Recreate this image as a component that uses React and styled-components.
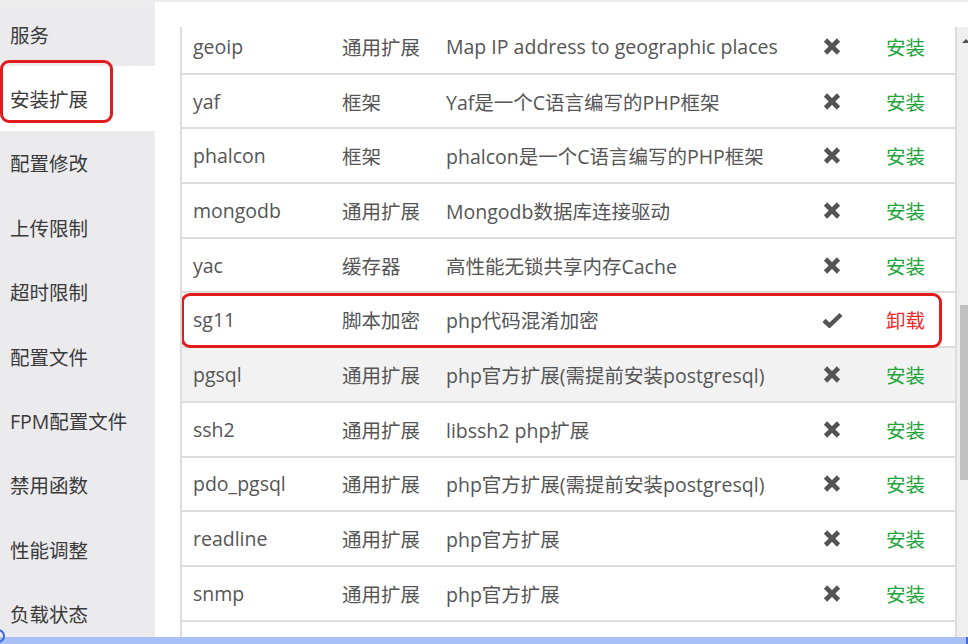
import React, { useLayoutEffect, useRef } from "react";
import styled, { createGlobalStyle } from "styled-components";

const Global = createGlobalStyle`
  html, body { margin: 0; padding: 0; }
  body {
    width: 968px;
    height: 644px;
    overflow: hidden;
    background: #fff;
    font-family: "Open Sans", "Noto Sans CJK SC", sans-serif;
  }
  * { box-sizing: border-box; }
`;

const Page = styled.div`
  width: 968px;
  height: 644px;
  display: flex;
  flex-direction: column;
  overflow: hidden;
`;

const TopLine = styled.div`
  height: 2px;
  flex: none;
  background: #ededed;
`;

const Body = styled.div`
  height: 635px;
  flex: none;
  display: flex;
  overflow: hidden;
`;

const Sidebar = styled.nav`
  width: 155px;
  flex: none;
  background: #ebebee;
  display: flex;
  flex-direction: column;
`;

const NavItem = styled.div`
  position: relative;
  height: 64.4px;
  flex: none;
  display: flex;
  align-items: center;
  padding-left: 10px;
  font-size: 19.5px;
  color: #3a3a3a;
  background: ${(p) => (p.$active ? "#fff" : "transparent")};
`;

const Annotation = styled.div`
  position: absolute;
  border: 3px solid #e21c1c;
  border-radius: 9px;
  pointer-events: none;
  top: ${(p) => p.$top}px;
  left: ${(p) => p.$left}px;
  width: ${(p) => p.$width}px;
  height: ${(p) => p.$height}px;
`;

const Main = styled.main`
  flex: 1;
  background: #fff;
  padding: 25px 0 0 25px;
  display: flex;
  min-width: 0;
`;

const Viewport = styled.div`
  flex: 1;
  overflow: hidden;
  border-left: 2px solid #dddddd;
`;

const Row = styled.div`
  position: relative;
  height: 54.7px;
  display: grid;
  grid-template-columns: 150px 104px 364px 64px 91px;
  align-items: center;
  border-bottom: 2px solid #dddddd;
  background: ${(p) => (p.$hover ? "#f2f2f2" : "#fff")};
  font-size: 19.5px;
  color: #555;
  white-space: nowrap;
`;

const Cell = styled.div`
  padding-left: ${(p) => p.$pad ?? 10}px;
  overflow: hidden;
`;

const StatusCell = styled.div`
  display: flex;
  justify-content: center;
  align-items: center;
  color: #545454;
`;

const Action = styled.a`
  padding-left: 22px;
  color: ${(p) => (p.$danger ? "#ee2b2b" : "#20a53a")};
  text-decoration: none;
  cursor: pointer;
`;

const Scrollbar = styled.div`
  width: 13px;
  flex: none;
  background: #efefef;
  border-left: 2px solid #dddddd;
  display: flex;
  flex-direction: column;
`;

const Arrow = styled.div`
  margin: 12px 0 0 5px;
  width: 0;
  height: 0;
  border-left: 4px solid transparent;
  border-right: 4px solid transparent;
  border-bottom: 4px solid #505050;
`;

const Thumb = styled.div`
  margin: 262px 0 0 3px;
  width: 10px;
  height: 175px;
  background: #c1c1c1;
`;

const BottomBar = styled.div`
  position: relative;
  height: 7px;
  flex: none;
  background: #a8c0f5;
  border-right: 2px solid #3a6be0;
`;

const Knob = styled.div`
  position: absolute;
  left: -9px;
  top: -8px;
  width: 14px;
  height: 14px;
  border-radius: 50%;
  border: 2px solid #3a6be0;
`;

const Cross = () => (
  <svg width="18" height="17" viewBox="0 0 18 17">
    <path d="M2.5 2 L15.5 15 M15.5 2 L2.5 15" stroke="currentColor" strokeWidth="4.6" fill="none" />
  </svg>
);

const Check = () => (
  <svg width="21" height="16" viewBox="0 0 21 16">
    <path d="M2 8.5 L7.5 13.5 L19 2.5" stroke="currentColor" strokeWidth="4.4" fill="none" strokeLinejoin="miter" />
  </svg>
);

const navItems = [
  "服务",
  "安装扩展",
  "配置修改",
  "上传限制",
  "超时限制",
  "配置文件",
  "FPM配置文件",
  "禁用函数",
  "性能调整",
  "负载状态",
];

const extensions = [
  { name: "geoip", type: "通用扩展", desc: "Map IP address to geographic places" },
  { name: "yaf", type: "框架", desc: "Yaf是一个C语言编写的PHP框架" },
  { name: "phalcon", type: "框架", desc: "phalcon是一个C语言编写的PHP框架" },
  { name: "mongodb", type: "通用扩展", desc: "Mongodb数据库连接驱动" },
  { name: "yac", type: "缓存器", desc: "高性能无锁共享内存Cache" },
  { name: "sg11", type: "脚本加密", desc: "php代码混淆加密", installed: true, marked: true },
  { name: "pgsql", type: "通用扩展", desc: "php官方扩展(需提前安装postgresql)", hover: true },
  { name: "ssh2", type: "通用扩展", desc: "libssh2 php扩展" },
  { name: "pdo_pgsql", type: "通用扩展", desc: "php官方扩展(需提前安装postgresql)" },
  { name: "readline", type: "通用扩展", desc: "php官方扩展" },
  { name: "snmp", type: "通用扩展", desc: "php官方扩展" },
];

export default function App() {
  const listRef = useRef(null);
  useLayoutEffect(() => {
    if (listRef.current) listRef.current.scrollTop = 7;
  }, []);

  return (
    <Page>
      <Global />
      <TopLine />
      <Body>
        <Sidebar>
          {navItems.map((label, i) => (
            <NavItem key={label} $active={i === 1}>
              {label}
              {i === 1 && <Annotation $top={-6.4} $left={0} $width={113} $height={63} />}
            </NavItem>
          ))}
        </Sidebar>
        <Main>
          <Viewport ref={listRef}>
            {extensions.map((ext) => (
              <Row key={ext.name} $hover={ext.hover}>
                <Cell $pad={11}>{ext.name}</Cell>
                <Cell>{ext.type}</Cell>
                <Cell>{ext.desc}</Cell>
                <StatusCell>{ext.installed ? <Check /> : <Cross />}</StatusCell>
                <Action $danger={ext.installed}>{ext.installed ? "卸载" : "安装"}</Action>
                {ext.marked && <Annotation $top={-0.5} $left={-1} $width={761} $height={55} />}
              </Row>
            ))}
            <Row aria-hidden="true" />
          </Viewport>
          <Scrollbar>
            <Arrow />
            <Thumb />
          </Scrollbar>
        </Main>
      </Body>
      <BottomBar>
        <Knob />
      </BottomBar>
    </Page>
  );
}
